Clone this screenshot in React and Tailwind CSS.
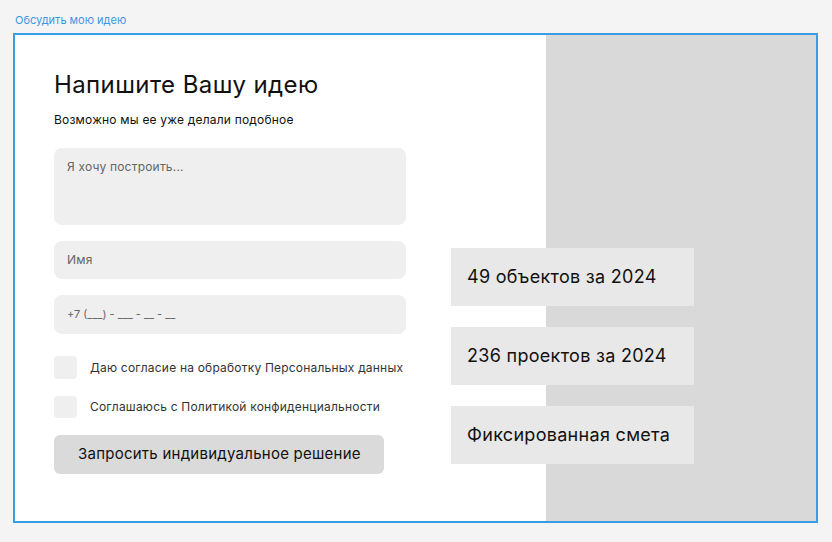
export default function App() {
  const stats = ['49 объектов за 2024', '236 проектов за 2024', 'Фиксированная смета']

  return (
    <div className="min-h-[542px] bg-[#f4f4f4] pl-[13px] pr-[14px] pt-[13px] pb-[20px] font-['Inter',sans-serif] text-[#111]">
      <div className="pl-[2px] text-[11px] leading-[14px] text-[#3a97e4]">Обсудить мою идею</div>

      <div className="mt-[6px] flex h-[490px] border-2 border-[#3a9be6] bg-white">
        {/* form */}
        <div className="w-[531px] shrink-0 pl-[39px] pt-[36px]">
          <h1 className="text-[24px] leading-[28px] font-normal tracking-[0.4px]">Напишите Вашу идею</h1>
          <p className="mt-[13px] text-[12px] leading-[16px] tracking-[0.2px]">Возможно мы ее уже делали подобное</p>

          <div className="mt-[20px] flex w-[352px] flex-col gap-[16px]">
            <div className="h-[77px] rounded-[8px] bg-[#efefef] px-[13px] pt-[11px] text-[12px] leading-[16px] tracking-[0.2px] text-[#666]">
              Я хочу построить...
            </div>
            <div className="flex h-[38px] items-center rounded-[8px] bg-[#efefef] px-[13px] text-[12px] tracking-[0.2px] text-[#666]">
              Имя
            </div>
            <div className="flex h-[39px] items-center rounded-[8px] bg-[#efefef] px-[13px] text-[11px] text-[#666]">
              +7 (___) - ___ - __ - __
            </div>
          </div>

          <div className="mt-[22px] flex flex-col gap-[17px]">
            <label className="flex items-center gap-[13px] text-[12px] tracking-[0.2px] text-[#333]">
              <span className="h-[23px] w-[23px] rounded-[4px] bg-[#efefef]" />
              Даю согласие на обработку Персональных данных
            </label>
            <label className="flex items-center gap-[13px] text-[12px] tracking-[0.2px] text-[#333]">
              <span className="h-[22px] w-[23px] rounded-[4px] bg-[#efefef]" />
              Соглашаюсь с Политикой конфиденциальности
            </label>
          </div>

          <button className="mt-[17px] flex h-[39px] w-[330px] items-center rounded-[6px] bg-[#dadada] pl-[24px] text-[15px] tracking-[0.25px] text-[#111]">
            Запросить индивидуальное решение
          </button>
        </div>

        {/* gray side with stats */}
        <div className="flex-1 bg-[#d9d9d9]">
          <div className="-ml-[95px] mt-[213px] flex w-[243px] flex-col gap-[21px]">
            {stats.map((s) => (
              <div key={s} className="flex h-[58px] items-center bg-[#e8e8e8] pb-[1px] pl-[16px] text-[18px] tracking-[0.3px] text-[#111]">
                {s}
              </div>
            ))}
          </div>
        </div>
      </div>
    </div>
  )
}
